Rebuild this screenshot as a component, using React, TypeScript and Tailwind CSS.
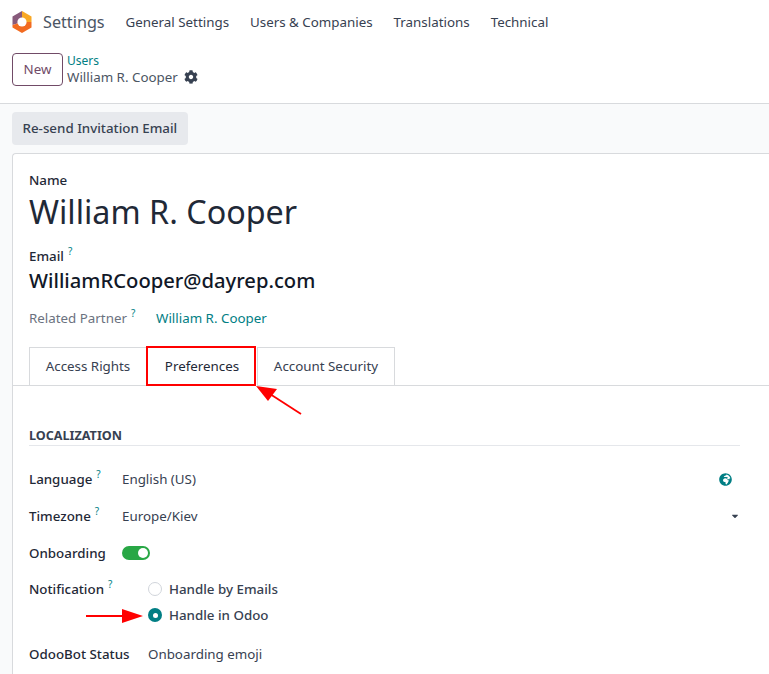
import { FaCog, FaGlobeAfrica, FaCaretDown } from 'react-icons/fa';

function Help() {
  return <sup className="ml-1 text-[10px] font-normal text-[#017e84] top-[-6px] relative align-baseline leading-none">?</sup>;
}

function Field({ label, help, children, w = 'w-[93px]' }: { label: string; help?: boolean; children: React.ReactNode; w?: string }) {
  return (
    <div className="flex items-center">
      <div className={`${w} shrink-0 font-medium text-[#1f2937]`}>
        {label}
        {help && <Help />}
      </div>
      {children}
    </div>
  );
}

export default function App() {
  return (
    <div className="relative h-[674px] w-[769px] overflow-hidden bg-white font-['Noto_Sans',sans-serif] text-[13.35px] text-[#374151]">
      {/* navbar */}
      <nav className="flex h-[44px] items-center pl-3">
        <svg width="20" height="22" viewBox="0 0 20 22" className="mr-[11px]">
          <path d="M10 0 L19.5 5.5 L19.5 11 L10 11 Z" fill="#f9a825" />
          <path d="M10 0 L0.5 5.5 L0.5 14 L10 11 Z" fill="#875a7b" />
          <path d="M0.5 14 L0.5 16.5 L10 22 L19.5 16.5 L19.5 11 L10 11 Z" fill="#f26b21" />
          <circle cx="10" cy="11" r="4.6" fill="#fff" />
        </svg>
        <span className="mr-[21px] text-[16.2px] text-[#4b5563]">Settings</span>
        <div className="flex gap-[21px] text-[#374151]">
          <span>General Settings</span>
          <span>Users &amp; Companies</span>
          <span>Translations</span>
          <span>Technical</span>
        </div>
      </nav>

      {/* control panel */}
      <div className="flex h-[60px] items-start border-b border-[#d8dadd] pl-3 pt-[9px]">
        <button className="h-[33px] w-[51px] rounded-[4px] border border-[#714b67] text-[#714b67]">New</button>
        <div className="ml-1 leading-[16px]">
          <div className="text-xs text-[#017e84]">Users</div>
          <div className="flex items-center gap-[6px] text-[#4b5563]">
            William R. Cooper <FaCog className="text-[14px] text-[#374151]" />
          </div>
        </div>
      </div>

      {/* status bar + sheet */}
      <div className="bg-[#f9fafb] pl-3 pt-2">
        <button className="h-[33px] rounded-[4px] bg-[#e7e9ed] px-[10.5px] font-medium text-[#374151]">Re-send Invitation Email</button>
        <div className="mt-2 h-[521px] rounded-tl-[4px] border-l border-t border-[#d8dadd] bg-white pt-[17px]">
          <div className="px-4">
            <div className="font-medium leading-[18px] text-[#1f2937]">Name</div>
            <div className="text-[32.3px] leading-[44px] text-[#1f2937]">William R. Cooper</div>
            <div className="mt-[14px] font-medium leading-[18px] text-[#1f2937]">Email<Help /></div>
            <div className="text-[20.2px] font-medium leading-[30px] text-[#111827]">WilliamRCooper@dayrep.com</div>
            <div className="mt-[13px] flex h-[21px] items-center">
              <div className="w-[127px] text-[#6b7280]">Related Partner<Help /></div>
              <span className="text-[#017e84]">William R. Cooper</span>
            </div>
          </div>

          {/* tabs */}
          <div className="mt-[18px] flex h-[39px] items-stretch border-b border-[#d8dadd] pl-4">
            <div className="mb-[-1px] flex w-[118px] items-center justify-center border border-b-0 border-[#d8dadd] pb-[2px]">Access Rights</div>
            <div className="relative mb-[-1px] flex w-[110px] items-center justify-center bg-white pb-[1px] text-[#1f2937]">Preferences</div>
            <div className="mb-[-1px] flex w-[138px] items-center justify-center border border-b-0 border-[#d8dadd] pb-[2px]">Account Security</div>
          </div>

          <div className="pl-4 pr-[29px] pt-[41px]">
            <div className="border-b border-[#e5e7eb] pb-[1px] text-[12.6px] font-bold leading-[17px] text-[#374151]">LOCALIZATION</div>
            <div className="mt-[23px] flex flex-col">
              <div className="h-[37px]">
                <Field label="Language" help>
                  <span>English (US)</span>
                  <FaGlobeAfrica className="ml-auto mr-[8px] text-[13px] text-[#017e84]" />
                </Field>
              </div>
              <div className="h-[37px]">
                <Field label="Timezone" help>
                  <span>Europe/Kiev</span>
                  <FaCaretDown className="ml-auto text-[10px] text-[#374151]" />
                </Field>
              </div>
              <div className="h-[36px]">
                <Field label="Onboarding">
                  <span className="flex h-[14px] w-[28px] items-center justify-end rounded-full bg-[#28a745] pr-[2px]">
                    <span className="h-[10px] w-[10px] rounded-full bg-white" />
                  </span>
                </Field>
              </div>
              <div className="flex h-[65px]">
                <div className="w-[119px] shrink-0 font-medium text-[#1f2937]">Notification<Help /></div>
                <div className="flex flex-col gap-[6px]">
                  <div className="flex items-center gap-[7px] font-medium">
                    <span className="h-[14px] w-[14px] rounded-full border border-[#d1d5db] bg-white" />
                    Handle by Emails
                  </div>
                  <div className="flex items-center gap-[7px] font-medium">
                    <span className="flex h-[14px] w-[14px] items-center justify-center rounded-full bg-[#017e84]">
                      <span className="h-[5px] w-[5px] rounded-full bg-white" />
                    </span>
                    Handle in Odoo
                  </div>
                </div>
              </div>
              <div className="flex items-center">
                <div className="w-[119px] shrink-0 font-medium text-[#1f2937]">OdooBot Status</div>
                <span>Onboarding emoji</span>
              </div>
            </div>
          </div>
        </div>
      </div>

      {/* annotations */}
      <div className="absolute left-[146px] top-[346px] h-[40px] w-[110px] border-2 border-[#f00]" />
      <svg className="pointer-events-none absolute left-0 top-0" width="769" height="674">
        <line x1="301" y1="414" x2="270" y2="394" stroke="#f00" strokeWidth="1.8" />
        <polygon points="256,386 277,389 268,401" fill="#f00" />
        <line x1="86" y1="616" x2="125" y2="616" stroke="#f00" strokeWidth="1.8" />
        <polygon points="143,616 122,609 122,623" fill="#f00" />
      </svg>
    </div>
  );
}
